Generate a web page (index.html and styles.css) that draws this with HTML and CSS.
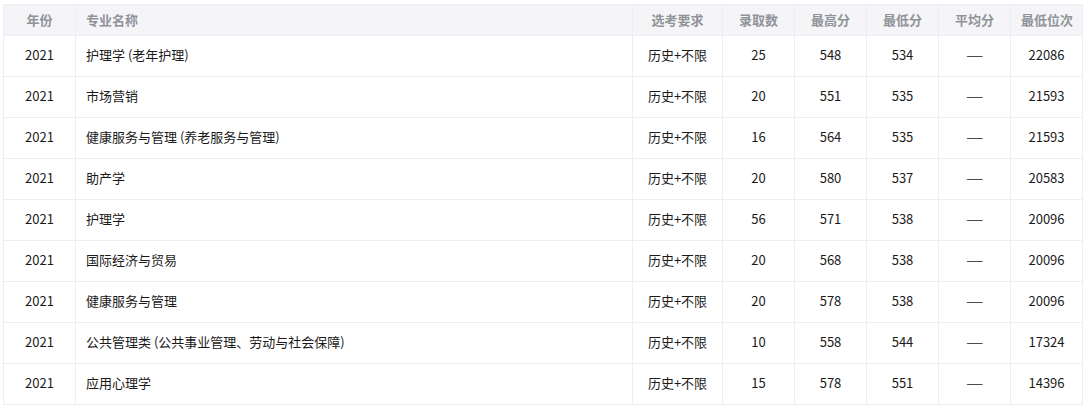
FILE: index.html
```html
<!DOCTYPE html>
<html lang="zh-CN">
<head>
<meta charset="utf-8">
<title>录取分数</title>
<link rel="stylesheet" href="styles.css">
</head>
<body>
<div class="wrap">
<table class="score-table">
  <colgroup>
    <col class="c-year"><col class="c-name"><col class="c-req"><col class="c-num"><col class="c-num"><col class="c-num"><col class="c-num"><col class="c-num">
  </colgroup>
  <thead>
    <tr>
      <th>年份</th><th class="left">专业名称</th><th>选考要求</th><th>录取数</th><th>最高分</th><th>最低分</th><th>平均分</th><th>最低位次</th>
    </tr>
  </thead>
  <tbody>
    <tr><td>2021</td><td class="left">护理学 (老年护理)</td><td>历史+不限</td><td>25</td><td>548</td><td>534</td><td><span class="dash">—</span></td><td>22086</td></tr>
    <tr><td>2021</td><td class="left">市场营销</td><td>历史+不限</td><td>20</td><td>551</td><td>535</td><td><span class="dash">—</span></td><td>21593</td></tr>
    <tr><td>2021</td><td class="left">健康服务与管理 (养老服务与管理)</td><td>历史+不限</td><td>16</td><td>564</td><td>535</td><td><span class="dash">—</span></td><td>21593</td></tr>
    <tr><td>2021</td><td class="left">助产学</td><td>历史+不限</td><td>20</td><td>580</td><td>537</td><td><span class="dash">—</span></td><td>20583</td></tr>
    <tr><td>2021</td><td class="left">护理学</td><td>历史+不限</td><td>56</td><td>571</td><td>538</td><td><span class="dash">—</span></td><td>20096</td></tr>
    <tr><td>2021</td><td class="left">国际经济与贸易</td><td>历史+不限</td><td>20</td><td>568</td><td>538</td><td><span class="dash">—</span></td><td>20096</td></tr>
    <tr><td>2021</td><td class="left">健康服务与管理</td><td>历史+不限</td><td>20</td><td>578</td><td>538</td><td><span class="dash">—</span></td><td>20096</td></tr>
    <tr><td>2021</td><td class="left">公共管理类 (公共事业管理、劳动与社会保障)</td><td>历史+不限</td><td>10</td><td>558</td><td>544</td><td><span class="dash">—</span></td><td>17324</td></tr>
    <tr><td>2021</td><td class="left">应用心理学</td><td>历史+不限</td><td>15</td><td>578</td><td>551</td><td><span class="dash">—</span></td><td>14396</td></tr>
  </tbody>
</table>
</div>
</body>
</html>
```
FILE: styles.css
```css
html, body {
  margin: 0;
  padding: 0;
  background: #ffffff;
}
.wrap {
  padding: 4px 0 0 3px;
}
.score-table {
  width: 1080px;
  table-layout: fixed;
  border-collapse: collapse;
  font-family: "Noto Sans CJK SC", "Noto Sans", sans-serif;
  font-size: 13px;
  line-height: 18px;
  color: #1a1a1a;
}
.c-year { width: 72px; }
.c-name { width: 557px; }
.c-req { width: 90px; }
.c-num { width: 72px; }
.score-table th,
.score-table td {
  border: 1px solid #ebeef5;
  text-align: center;
  padding: 0 10px;
  white-space: nowrap;
}
.score-table th {
  height: 30px;
  background: #f5f5f7;
  color: #909399;
  font-weight: bold;
}
.score-table td {
  height: 38px;
  padding-bottom: 2px;
}
.score-table .left {
  text-align: left;
}
.dash {
  display: inline-block;
  transform: scaleX(1.5);
}
```
